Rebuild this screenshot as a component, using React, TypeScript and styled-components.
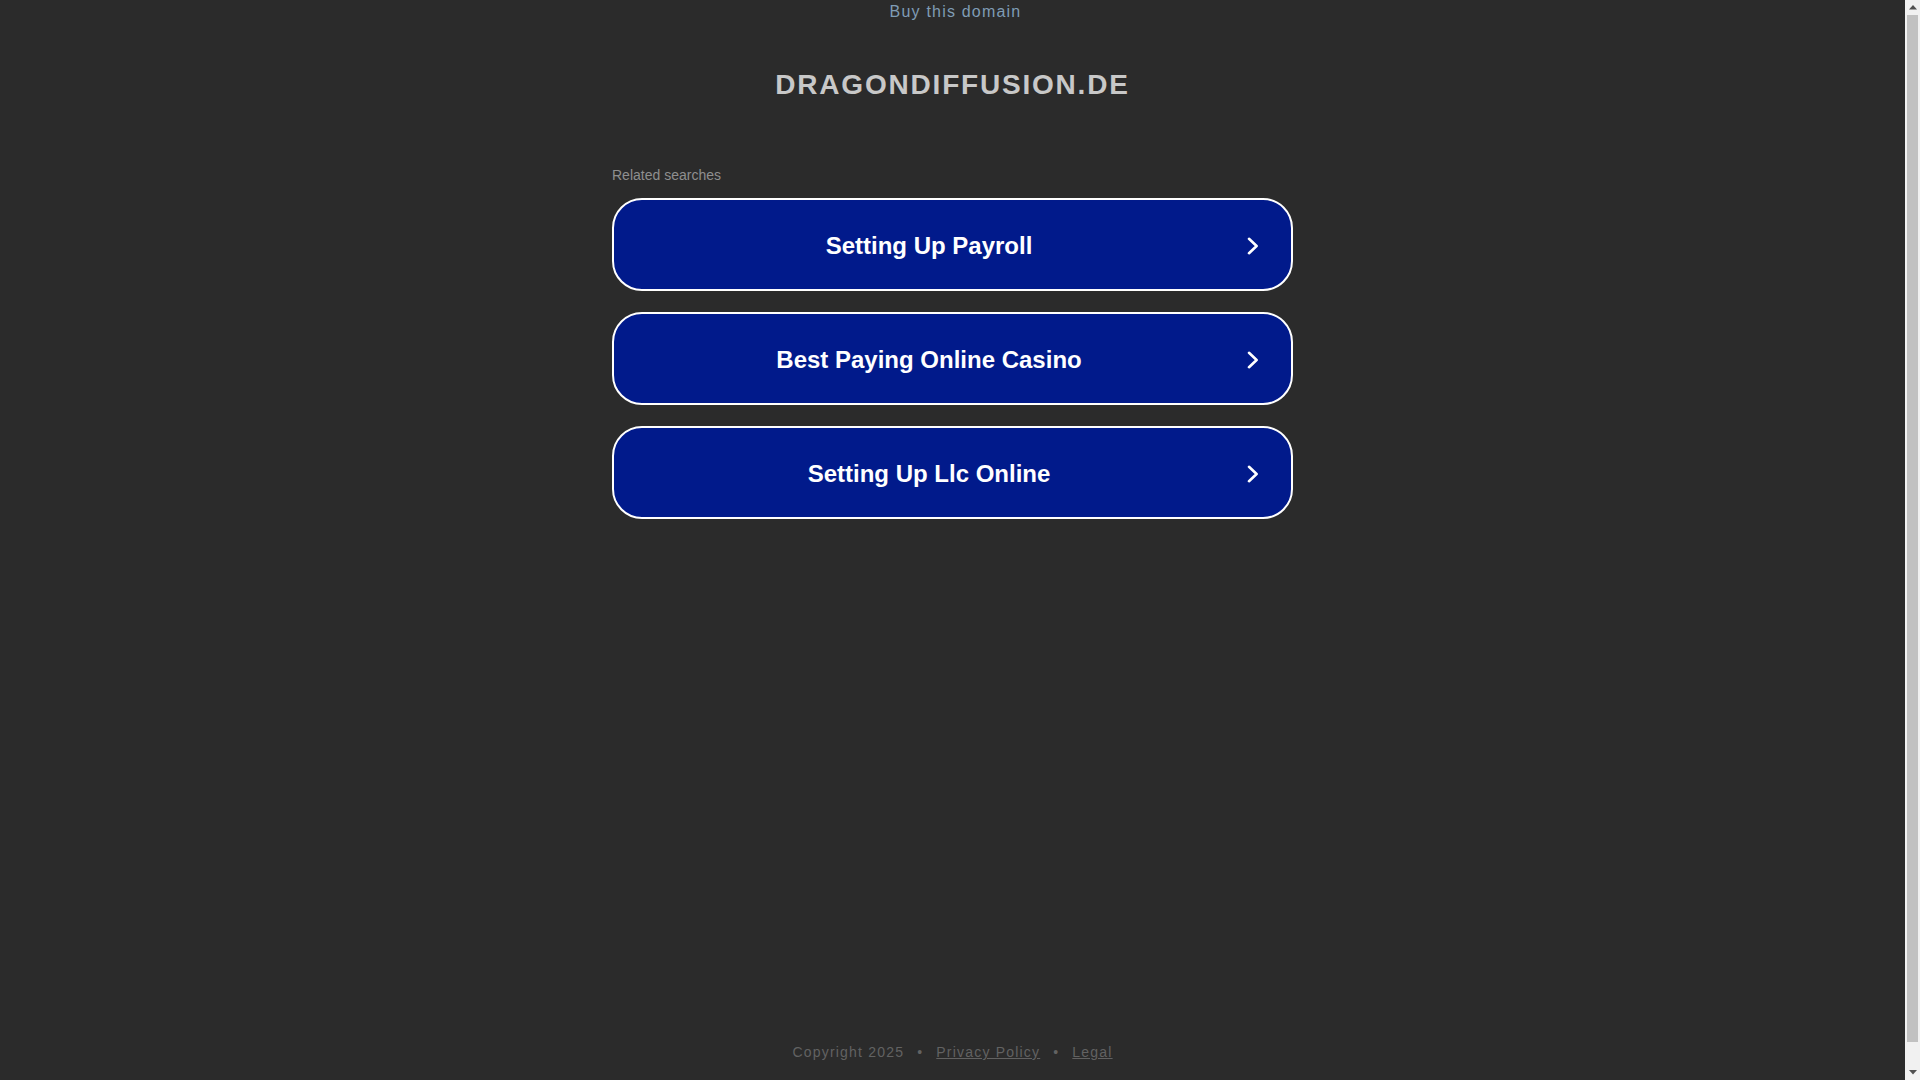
import styled, { createGlobalStyle } from "styled-components";

const GlobalStyle = createGlobalStyle`
  html, body {
    margin: 0;
    padding: 0;
    overflow: hidden;
    background-color: #2b2b2b;
  }
  body {
    font-family: "Liberation Sans", Arial, sans-serif;
  }
`;

const Page = styled.div`
  display: flex;
  height: 100vh;
  background-color: #2b2b2b;
`;

const Main = styled.main`
  flex: 1;
  display: flex;
  flex-direction: column;
  align-items: center;
`;

const TopBar = styled.a`
  display: block;
  margin-left: 6px;
  font-size: 16px;
  line-height: 24px;
  letter-spacing: 1.2px;
  color: #7f9cb5;
  text-decoration: none;
`;

const Title = styled.h1`
  margin: 44px 0 0;
  font-size: 28px;
  line-height: 34px;
  font-weight: 700;
  letter-spacing: 1.8px;
  color: #c8c8c8;
`;

const Searches = styled.div`
  display: flex;
  flex-direction: column;
  width: 681px;
  margin-top: 64px;
`;

const Label = styled.div`
  font-size: 14px;
  line-height: 18px;
  color: #8f8f8f;
  margin-bottom: 14px;
`;

const List = styled.div`
  display: flex;
  flex-direction: column;
  gap: 21px;
`;

const SearchLink = styled.a`
  box-sizing: border-box;
  display: flex;
  align-items: center;
  height: 93px;
  padding: 2px 32px 0 24px;
  gap: 27px;
  border: 2px solid #ffffff;
  border-radius: 30px;
  background-color: #011a8b;
  color: #ffffff;
  text-decoration: none;
  cursor: pointer;
`;

const LinkText = styled.span`
  flex: 1;
  text-align: center;
  font-size: 24px;
  font-weight: 700;
`;

const Footer = styled.footer`
  display: flex;
  align-items: center;
  gap: 13px;
  margin-top: auto;
  padding-bottom: 18px;
  font-size: 14px;
  line-height: 20px;
  letter-spacing: 1.2px;
  color: #626262;
`;

const FooterLink = styled.a`
  color: #626262;
  text-decoration: underline;
`;

const ScrollRail = styled.div`
  display: flex;
  flex-direction: column;
  width: 15px;
  background-color: #f1f1f1;
`;

const RailArrow = styled.div`
  display: flex;
  align-items: center;
  justify-content: center;
  height: 15px;
`;

const RailTrack = styled.div`
  flex: 1;
  padding: 0 2px 23px;
  display: flex;
`;

const RailThumb = styled.div`
  flex: 1;
  background-color: #c1c1c1;
`;

function Chevron() {
  return (
    <svg width="12" height="18" viewBox="0 0 12 18" fill="none">
      <path
        d="M2 1.8 L9.6 9 L2 16.2"
        stroke="#ffffff"
        strokeWidth="2.6"
        strokeLinecap="round"
        strokeLinejoin="round"
      />
    </svg>
  );
}

function Triangle({ $down }: { $down?: boolean }) {
  return (
    <svg width="8" height="5" viewBox="0 0 8 5">
      <path d={$down ? "M0 0 H8 L4 4.5 Z" : "M0 4.5 H8 L4 0 Z"} fill="#505050" />
    </svg>
  );
}

const searches = [
  "Setting Up Payroll",
  "Best Paying Online Casino",
  "Setting Up Llc Online",
];

export default function App() {
  return (
    <>
      <GlobalStyle />
      <Page>
        <Main>
          <TopBar href="#">Buy this domain</TopBar>
          <Title>DRAGONDIFFUSION.DE</Title>
          <Searches>
            <Label>Related searches</Label>
            <List>
              {searches.map((item) => (
                <SearchLink key={item} href="#">
                  <LinkText>{item}</LinkText>
                  <Chevron />
                </SearchLink>
              ))}
            </List>
          </Searches>
          <Footer>
            <span>Copyright 2025</span>
            <span>•</span>
            <FooterLink href="#">Privacy Policy</FooterLink>
            <span>•</span>
            <FooterLink href="#">Legal</FooterLink>
          </Footer>
        </Main>
        <ScrollRail>
          <RailArrow>
            <Triangle />
          </RailArrow>
          <RailTrack>
            <RailThumb />
          </RailTrack>
          <RailArrow>
            <Triangle $down />
          </RailArrow>
        </ScrollRail>
      </Page>
    </>
  );
}
